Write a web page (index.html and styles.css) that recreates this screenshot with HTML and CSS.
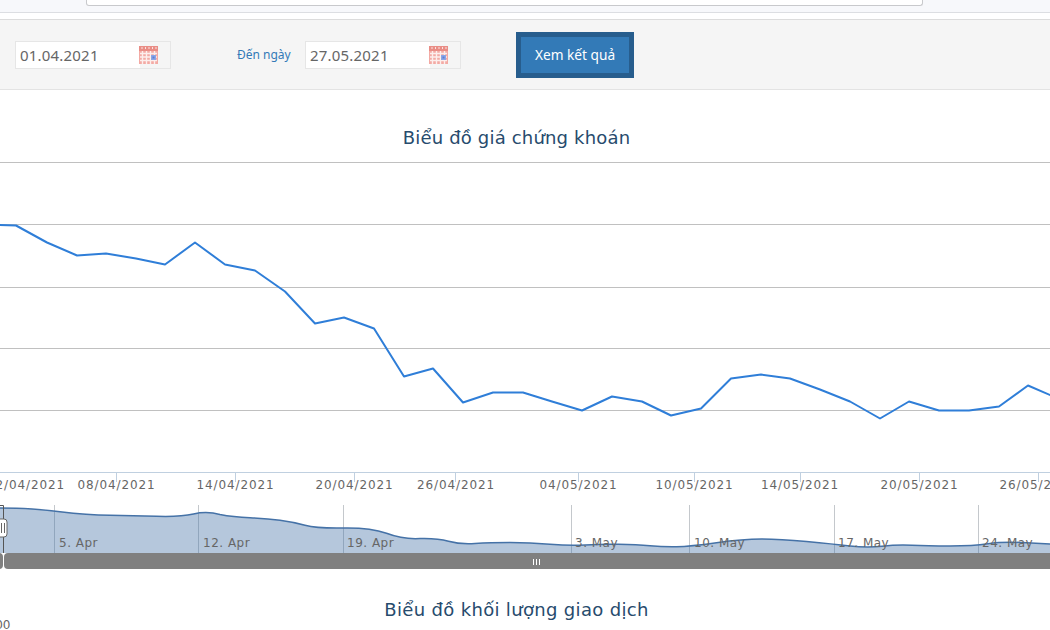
FILE: index.html
```html
<!DOCTYPE html>
<html lang="vi">
<head>
<meta charset="utf-8">
<title>Biểu đồ giá chứng khoán</title>
<link rel="stylesheet" href="styles.css">
</head>
<body>
<svg width="0" height="0" class="defs" aria-hidden="true">
  <defs>
    <symbol id="cal" viewBox="0 0 19 18">
      <rect x="0" y="0" width="19" height="18" fill="#f3aaa4"/>
      <rect x="0" y="0" width="19" height="5" fill="#e98d86"/>
      <path d="M3 1v2M6.500 1v2M10 1v2M13.500 1v2M17 1v2" stroke="#fbe3e0" stroke-width="1"/>
      <path d="M1 7.500h17M1 11h17M1 14.500h17M3.500 5v13M7.500 5v13M11.500 5v13M15.500 5v13" stroke="#fff" stroke-width="1.400" opacity=".8"/>
      <rect x="12" y="9" width="5" height="5" fill="#8aa6e6"/>
      <rect x="13.500" y="10.500" width="2" height="2" fill="#5f7fd6"/>
    </symbol>
  </defs>
</svg>
<div class="topbar"><div class="search"></div></div>
<div class="gap"></div>
<form class="filter">
  <div class="date"><span class="date-val">01.04.2021</span><svg class="cal"><use href="#cal"/></svg></div>
  <label class="lbl">Đến ngày</label>
  <div class="date"><span class="date-val">27.05.2021</span><svg class="cal"><use href="#cal"/></svg></div>
  <button type="button" class="btn">Xem kết quả</button>
</form>
<svg class="chart" width="1050" height="540" viewBox="0 90 1050 540">
  <text class="title" x="516.500" y="144">Biểu đồ giá chứng khoán</text>
  <path class="grid" d="M0 162.500H1050M0 224.500H1050M0 287.500H1050M0 348.500H1050M0 410.500H1050"/>
  <path class="axis" d="M0 472.500H1050M116.500 472v10M235.500 472v10M354.500 472v10M455.500 472v10M578.500 472v10M694.500 472v10M800.500 472v10M919.500 472v10M1038.500 472v10"/>
  <polyline class="price" points="-14,224 16,225 47,242 77,255 106,253 136,258 165,264 195,242 225,264 255,270 285,291 315,323 344,317 374,328 404,376 433,368 463,402 493,392 523,392 552,401 582,410 612,396 642,401 671,415 701,408 731,378 761,374 790,378 820,389 850,401 880,418 909,401 939,410 969,410 999,406 1028,385 1058,398"/>
  <g class="xlab">
    <text x="26" y="489">02/04/2021</text>
    <text x="116.500" y="489">08/04/2021</text>
    <text x="235.500" y="489">14/04/2021</text>
    <text x="354.500" y="489">20/04/2021</text>
    <text x="456" y="489">26/04/2021</text>
    <text x="578.500" y="489">04/05/2021</text>
    <text x="694.500" y="489">10/05/2021</text>
    <text x="800" y="489">14/05/2021</text>
    <text x="919.500" y="489">20/05/2021</text>
    <text x="1038.500" y="489">26/05/2021</text>
  </g>
  <path class="navgrid" d="M54.500 505v48M198.500 505v48M343.500 505v48M571.500 505v48M689.500 505v48M834.500 505v48M978.500 505v48"/>
  <path class="navfill" d="M0 508L16.500 508.250Q33 508.500 60 511.750Q87 515 110 515.250Q133 515.500 156.500 516.250Q180 517 193.500 514Q207 511 220 514.500Q233 517 250 517.750Q267 518.500 280 520.250Q293 522 305 525.250Q317 528.500 343.500 528Q370 527.500 386.500 533.250Q403 539.500 420 538.500Q437 538 448.500 541.250Q460 544.500 475 543.500Q490 542.500 510 542.500Q530 542.500 550 544.250Q570 546 585 545Q600 544 618.500 544.250Q637 544.500 650 545.750Q663 547 676.500 546.750Q690 546.500 716.500 542.750Q743 539 761.500 539Q780 539 806.500 541.500Q833 544 850 546Q867 548 882 546.250Q897 544.500 912 545.250Q927 546 950 546Q973 546 988 543.750Q1003 541.500 1026.500 542.750L1050 544V553H0Z"/>
  <path class="navline" d="M0 508L16.500 508.250Q33 508.500 60 511.750Q87 515 110 515.250Q133 515.500 156.500 516.250Q180 517 193.500 514Q207 511 220 514.500Q233 517 250 517.750Q267 518.500 280 520.250Q293 522 305 525.250Q317 528.500 343.500 528Q370 527.500 386.500 533.250Q403 539.500 420 538.500Q437 538 448.500 541.250Q460 544.500 475 543.500Q490 542.500 510 542.500Q530 542.500 550 544.250Q570 546 585 545Q600 544 618.500 544.250Q637 544.500 650 545.750Q663 547 676.500 546.750Q690 546.500 716.500 542.750Q743 539 761.500 539Q780 539 806.500 541.500Q833 544 850 546Q867 548 882 546.250Q897 544.500 912 545.250Q927 546 950 546Q973 546 988 543.750Q1003 541.500 1026.500 542.750L1050 544"/>
  <g class="navlab">
    <text x="59" y="547">5. Apr</text>
    <text x="203" y="547">12. Apr</text>
    <text x="347" y="547">19. Apr</text>
    <text x="575" y="547">3. May</text>
    <text x="694" y="547">10. May</text>
    <text x="838" y="547">17. May</text>
    <text x="982" y="547">24. May</text>
  </g>
  <rect class="scroll" x="-20" y="553" width="23" height="16" rx="4"/>
  <rect class="scroll" x="4" y="553" width="1052" height="16" rx="4"/>
  <path class="grip" d="M533.500 559v6M536.500 559v6M539.500 559v6"/>
  <path class="selline" d="M0 505.500H3.500V553"/>
  <rect class="handle" x="-5" y="519" width="12" height="18" rx="3"/>
  <path class="handlegrip" d="M1.500 523v10M4.500 523v10"/>
  <text class="title title-wide" x="516.500" y="616">Biểu đồ khối lượng giao dịch</text>
  <text class="ylab" x="10.500" y="629" text-anchor="end">200</text>
</svg>
</body>
</html>
```
FILE: styles.css
```css
* { box-sizing: border-box; }
html, body { margin: 0; padding: 0; }
body {
  width: 1050px;
  height: 630px;
  overflow: hidden;
  background: #fff;
  font-family: "DejaVu Sans", Verdana, sans-serif;
}
.defs { display: block; height: 0; }
.topbar {
  height: 13px;
  background: #f7f8fb;
  border-bottom: 1px solid #dcdee2;
  padding-left: 86px;
}
.search {
  width: 837px;
  height: 6px;
  background: #fff;
  border: 1px solid #c8c9cc;
  border-top: 0;
  border-radius: 0 0 3px 3px;
}
.gap { height: 6px; background: #fff; }
.filter {
  display: flex;
  align-items: center;
  height: 71px;
  background: #f5f5f5;
  border-top: 1px solid #dcdcdc;
  border-bottom: 1px solid #e3e3e3;
  padding-left: 15px;
}
.date {
  display: flex;
  align-items: center;
  justify-content: space-between;
  width: 156px;
  height: 28px;
  border: 1px solid #e6e6e6;
  background: linear-gradient(to right, #fff 124px, #f5f5f5 124px);
  padding: 0 12px 0 4px;
}
.date-val {
  font: 15px/26px "Noto Sans", sans-serif;
  letter-spacing: .2px;
  color: #666;
  padding-bottom: 2px;
  height: 26px;
}
.cal { width: 19px; height: 18px; display: block; }
.lbl {
  margin-left: 66px;
  width: 68px;
  font: 12px "Noto Sans", sans-serif;
  color: #337ab7;
}
.btn {
  margin-left: 55px;
  width: 118px;
  height: 46px;
  border: 5px solid #275d8d;
  background: #337ab7;
  color: #fff;
  font: 13.700px "Noto Sans", sans-serif;
  padding: 0;
}
.chart { display: block; overflow: hidden; }
.title {
  font: 18px "DejaVu Sans", sans-serif;
  fill: #274b6d;
  text-anchor: middle;
  letter-spacing: .18px;
}
.title-wide { letter-spacing: .33px; }
.grid { stroke: #c0c0c0; stroke-width: 1; fill: none; }
.axis { stroke: #c0d0e0; stroke-width: 1; fill: none; }
.price { fill: none; stroke: #2f7ed8; stroke-width: 2; stroke-linejoin: round; transform: translateY(.5px); }
.xlab text { font-size: 12px; fill: #666; text-anchor: middle; letter-spacing: .9px; }
.navgrid { stroke: #c4c8cc; stroke-width: 1; fill: none; }
.navfill { fill: rgba(69, 114, 167, .4); }
.navline { fill: none; stroke: #4572a7; stroke-width: 1.500; stroke-linejoin: round; }
.navlab text { font-size: 12px; fill: #666; letter-spacing: .5px; }
.scroll { fill: #808080; }
.grip { stroke: #fff; stroke-width: 1; fill: none; }
.selline { stroke: #555; stroke-width: 1; fill: none; }
.handle { fill: #fff; stroke: #666; stroke-width: 1; }
.handlegrip { stroke: #666; stroke-width: 1; fill: none; }
.ylab { font-size: 12px; fill: #666; }
```
